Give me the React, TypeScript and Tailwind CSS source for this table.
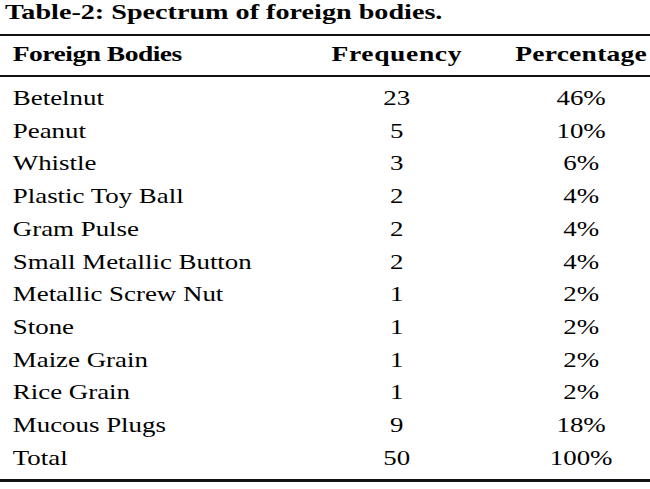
const rows: [string, string, string][] = [
  ["Betelnut", "23", "46%"],
  ["Peanut", "5", "10%"],
  ["Whistle", "3", "6%"],
  ["Plastic Toy Ball", "2", "4%"],
  ["Gram Pulse", "2", "4%"],
  ["Small Metallic Button", "2", "4%"],
  ["Metallic Screw Nut", "1", "2%"],
  ["Stone", "1", "2%"],
  ["Maize Grain", "1", "2%"],
  ["Rice Grain", "1", "2%"],
  ["Mucous Plugs", "9", "18%"],
  ["Total", "50", "100%"],
];

const App = () => {
  return (
    <div className="w-[650px] h-[489px] bg-white overflow-hidden">
      {/* the source is a stretched scan of a Times table, so it is widened on x */}
      <div className="w-[508px] origin-left scale-x-[1.28] text-black font-[family-name:Liberation_Serif,Times_New_Roman,serif]">
        <h1 className="pl-[4px] text-[22px] leading-[24px] font-bold">
          Table-2: Spectrum of foreign bodies.
        </h1>
        <div className="mt-[10px] h-[2px] bg-[#111]" />

        <div className="grid grid-cols-[250px_120px_138px] pt-[5px] pb-[8px] text-[21.5px] leading-[26px] font-bold">
          <div className="pl-[10px] tracking-[-0.4px]">Foreign Bodies</div>
          <div className="text-center tracking-[0.5px]">Frequency</div>
          <div className="pl-[30px] text-center tracking-[0.2px]">Percentage</div>
        </div>
        <div className="h-[2px] bg-[#111]" />

        <div className="pt-[5px] pb-[5px] text-[21px] leading-[32.7px]">
          {rows.map(([name, freq, pct]) => (
            <div key={name} className="grid grid-cols-[250px_120px_138px]">
              <div className="pl-[10px]">{name}</div>
              <div className="text-center">{freq}</div>
              <div className="pl-[30px] text-center">{pct}</div>
            </div>
          ))}
        </div>
        <div className="h-[3px] bg-[#111]" />
      </div>
    </div>
  );
};

export default App;
